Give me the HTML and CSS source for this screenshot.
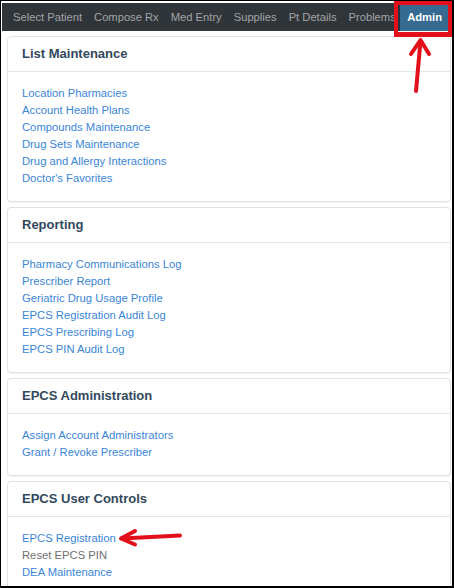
FILE: index.html
```html
<!DOCTYPE html>
<html>
<head>
<meta charset="utf-8">
<link rel="stylesheet" href="styles.css">
</head>
<body>
<div class="frame">
  <nav class="navbar">
    <ul class="nav-items">
      <li>Select Patient</li>
      <li>Compose Rx</li>
      <li>Med Entry</li>
      <li>Supplies</li>
      <li>Pt Details</li>
      <li>Problems</li>
    </ul>
    <div class="nav-admin">Admin</div>
  </nav>

  <main class="content">
    <section class="panel">
      <h2 class="panel-title">List Maintenance</h2>
      <ul class="panel-links">
        <li><a>Location Pharmacies</a></li>
        <li><a>Account Health Plans</a></li>
        <li><a>Compounds Maintenance</a></li>
        <li><a>Drug Sets Maintenance</a></li>
        <li><a>Drug and Allergy Interactions</a></li>
        <li><a>Doctor's Favorites</a></li>
      </ul>
    </section>

    <section class="panel">
      <h2 class="panel-title">Reporting</h2>
      <ul class="panel-links">
        <li><a>Pharmacy Communications Log</a></li>
        <li><a>Prescriber Report</a></li>
        <li><a>Geriatric Drug Usage Profile</a></li>
        <li><a>EPCS Registration Audit Log</a></li>
        <li><a>EPCS Prescribing Log</a></li>
        <li><a>EPCS PIN Audit Log</a></li>
      </ul>
    </section>

    <section class="panel">
      <h2 class="panel-title">EPCS Administration</h2>
      <ul class="panel-links">
        <li><a>Assign Account Administrators</a></li>
        <li><a>Grant / Revoke Prescriber</a></li>
      </ul>
    </section>

    <section class="panel">
      <h2 class="panel-title">EPCS User Controls</h2>
      <ul class="panel-links">
        <li><a>EPCS Registration</a></li>
        <li><span class="disabled">Reset EPCS PIN</span></li>
        <li><a>DEA Maintenance</a></li>
      </ul>
    </section>
  </main>

  <div class="highlight-box"></div>
  <svg class="annotations" width="454" height="588" viewBox="0 0 454 588">
    <g fill="none" stroke="#e3101b" stroke-width="4" stroke-linecap="round" stroke-linejoin="round">
      <path d="M416 91 L420.5 41"/>
      <path d="M411 54 L420.5 40 L429 54"/>
      <path d="M180 535.5 L122 538.5"/>
      <path d="M135 531 L121 538.5 L135 544.5"/>
    </g>
  </svg>
</div>
</body>
</html>
```

FILE: styles.css
```css
* {
  box-sizing: border-box;
}

html, body {
  margin: 0;
  padding: 0;
  background: #ffffff;
}

.frame {
  position: relative;
  width: 454px;
  height: 588px;
  border-style: solid;
  border-color: #000000;
  border-width: 1px 2px 2px 1px;
  padding: 2px 0 0 1px;
  overflow: hidden;
  font-family: "Liberation Sans", Arial, sans-serif;
  background: #ffffff;
}

.navbar {
  display: flex;
  height: 28px;
  background: #30353a;
}

.nav-items {
  flex: 1;
  min-width: 0;
  display: flex;
  margin: 0;
  padding: 0 0 0 5px;
  list-style: none;
  overflow: hidden;
  white-space: nowrap;
}

.nav-items li {
  padding: 0 6px;
  line-height: 28px;
  font-size: 11.2px;
  color: #a3a4a6;
  flex: none;
}

.nav-admin {
  flex: none;
  padding: 0 10px 0 7px;
  line-height: 28px;
  font-size: 11.2px;
  font-weight: bold;
  color: #ffffff;
  background: #376a90;
  border-left: 2px solid #26323d;
}

.content {
  padding: 5px 1px 0 5px;
}

.panel {
  border: 1px solid #e2e2e4;
  border-radius: 4px;
  box-shadow: 0 1px 1px rgba(0, 0, 0, 0.05);
  margin-bottom: 5px;
  background: #ffffff;
}

.panel-title {
  margin: 0;
  padding: 0 14px;
  height: 35px;
  line-height: 34px;
  font-size: 13px;
  font-weight: bold;
  color: #33485c;
  border-bottom: 1px solid #e6e6e8;
}

.panel-links {
  list-style: none;
  margin: 0;
  padding: 13px 14px 14px;
}

.panel-links li {
  line-height: 17px;
  font-size: 11.25px;
  white-space: nowrap;
}

.panel-links a {
  color: #3a86d6;
  text-decoration: none;
}

.panel-links .disabled {
  color: #6f6f6f;
}

.highlight-box {
  position: absolute;
  left: 393px;
  top: 0;
  width: 58px;
  height: 36px;
  border: 4px solid #e3101b;
  border-bottom-width: 5px;
}

.annotations {
  position: absolute;
  left: -1px;
  top: -1px;
  pointer-events: none;
}
```
